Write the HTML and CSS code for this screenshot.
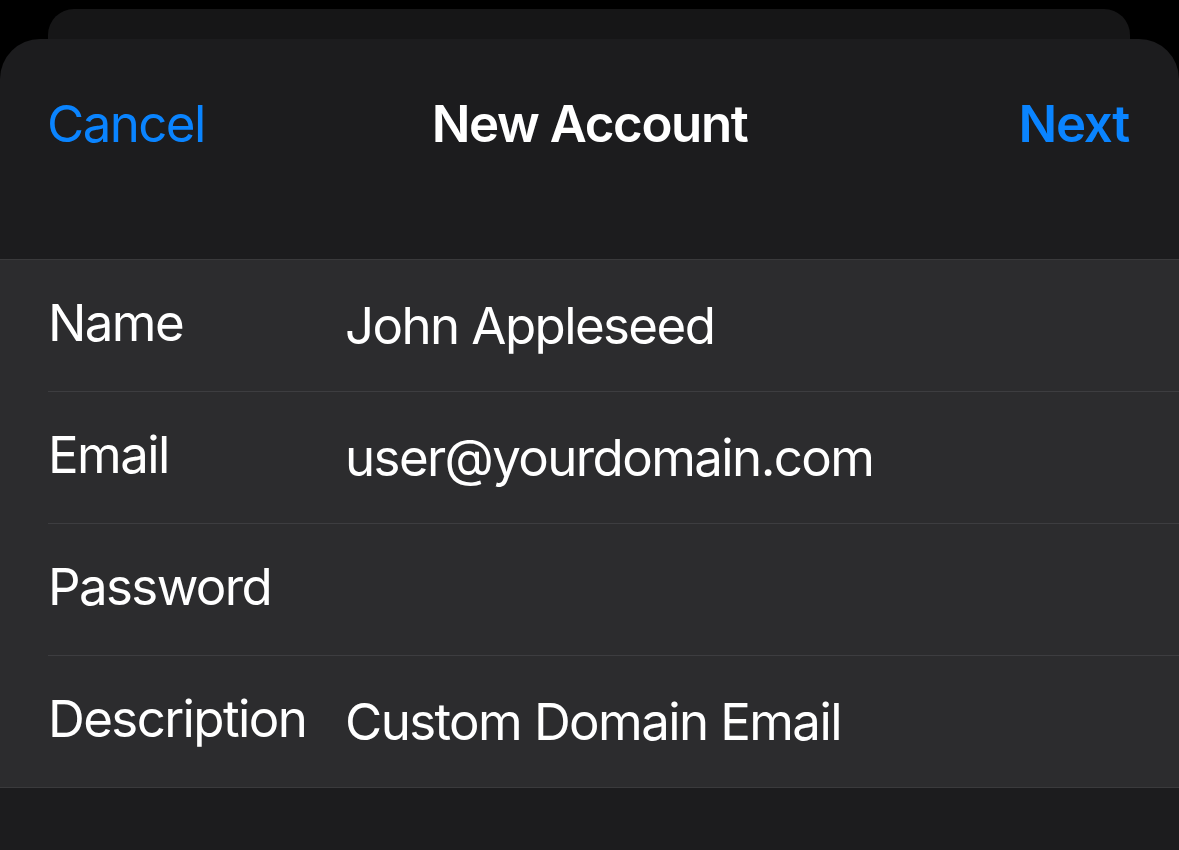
FILE: index.html
```html
<!DOCTYPE html>
<html lang="en">

<head>
    <meta charset="UTF-8">
    <meta name="viewport" content="width=device-width, initial-scale=1.0">
    <title>New Account</title>
    <link rel="stylesheet" href="styles.css">
</head>

<body>
    <div class="back-card"></div>
    <div class="sheet">
        <div class="nav">
            <span class="nav-btn">Cancel</span>
            <span class="nav-title">New Account</span>
            <span class="nav-btn nav-next">Next</span>
        </div>

        <!-- form rows -->
        <div class="group">
            <div class="row">
                <span class="row-label">Name</span>
                <span class="row-value">John Appleseed</span>
            </div>
            <div class="row">
                <span class="row-label">Email</span>
                <span class="row-value">user@yourdomain.com</span>
            </div>
            <div class="row">
                <span class="row-label">Password</span>
                <span class="row-value"></span>
            </div>
            <div class="row">
                <span class="row-label">Description</span>
                <span class="row-value">Custom Domain Email</span>
            </div>
        </div>
    </div>
</body>

</html>
```

FILE: styles.css
```css
body {
    margin: 0;
    background-color: #000;
    font-family: Inter, 'Noto Sans', sans-serif;
    color: #fff;
    height: 850px;
    overflow: hidden;
    display: flex;
    flex-direction: column;
}

.back-card {
    height: 30px;
    margin: 9px 49px 0 48px;
    background-color: #161617;
    border-radius: 26px 26px 0 0;
    flex-shrink: 0;
}

.sheet {
    flex: 1;
    background-color: #1c1c1e;
    border-radius: 40px 40px 0 0;
}

.nav {
    height: 221px;
    box-sizing: border-box;
    padding: 54px 50px 0 47px;
    display: flex;
    justify-content: space-between;
    align-items: flex-start;
    position: relative;
    border-bottom: 1px solid #3a3a3c;
    font-size: 51px;
    line-height: 62px;
    letter-spacing: -1.6px;
}

.nav-btn {
    color: #0a84ff;
}

.nav-next {
    font-weight: 600;
    letter-spacing: -1.3px;
}

.nav-title {
    font-weight: 600;
    letter-spacing: -1.4px;
    position: absolute;
    left: 0;
    right: 0;
    text-align: center;
}

.group {
    background-color: #2c2c2e;
    border-bottom: 1px solid #3a3a3c;
}

.row {
    height: 131px;
    margin-left: 48px;
    display: flex;
    align-items: center;
    border-bottom: 1px solid #3d3d40;
    font-size: 51px;
    line-height: 62px;
    letter-spacing: -1.6px;
}

.row:last-child {
    border-bottom: none;
}

.row-label {
    width: 297px;
    flex-shrink: 0;
    margin-top: -6px;
}

.row-value {
    margin-top: 0;
}
```
